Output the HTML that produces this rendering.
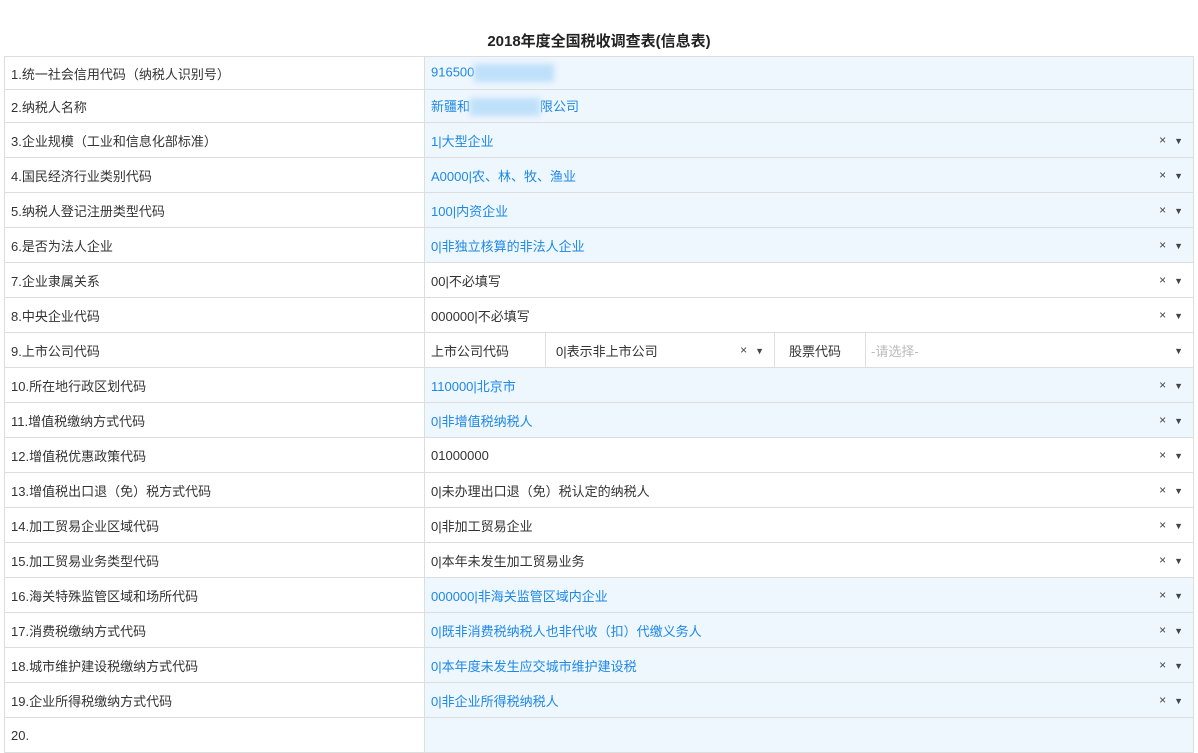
<!DOCTYPE html>
<html><head><meta charset="utf-8"><style>
body{margin:0;background:#fff;font-family:"Liberation Sans","Noto Sans CJK SC",sans-serif;font-size:13px;color:#333;width:1198px;height:721px;overflow:hidden;position:relative}
h1{position:absolute;left:0;width:1198px;top:30px;margin:0;text-align:center;font-size:15px;font-weight:bold;color:#222}
table{position:absolute;left:4px;top:56px;width:1190px;border-collapse:collapse}
td{border:1px solid #ddd;padding:0 6px;height:34px;vertical-align:middle}
td.l{width:407px}
tr.s td{height:32px}
td.v{position:relative}
tr.b td.v{background:#eef6fe;color:#1e88e5}
.ic{position:absolute;right:10px;top:50%;transform:translateY(-50%);font-size:12px;color:#444}
.ic b{font-weight:normal;font-size:9px;margin-left:8px}
.blur{display:inline-block;background:#bfe0fa;filter:blur(3px);height:18px;vertical-align:middle}
.sub{position:absolute;top:0;bottom:0;border-right:1px solid #ddd;display:flex;align-items:center}
</style></head><body>
<h1>2018年度全国税收调查表(信息表)</h1>
<table>
<tr class="b s"><td class="l">1.统一社会信用代码（纳税人识别号）</td><td class="v">916500<span class="blur" style="width:80px"></span></td></tr>
<tr class="b s"><td class="l">2.纳税人名称</td><td class="v">新疆和<span class="blur" style="width:70px"></span>限公司</td></tr>
<tr class="b"><td class="l">3.企业规模（工业和信息化部标准）</td><td class="v">1|大型企业<span class="ic">×<b>▼</b></span></td></tr>
<tr class="b"><td class="l">4.国民经济行业类别代码</td><td class="v">A0000|农、林、牧、渔业<span class="ic">×<b>▼</b></span></td></tr>
<tr class="b"><td class="l">5.纳税人登记注册类型代码</td><td class="v">100|内资企业<span class="ic">×<b>▼</b></span></td></tr>
<tr class="b"><td class="l">6.是否为法人企业</td><td class="v">0|非独立核算的非法人企业<span class="ic">×<b>▼</b></span></td></tr>
<tr><td class="l">7.企业隶属关系</td><td class="v">00|不必填写<span class="ic">×<b>▼</b></span></td></tr>
<tr><td class="l">8.中央企业代码</td><td class="v">000000|不必填写<span class="ic">×<b>▼</b></span></td></tr>
<tr><td class="l">9.上市公司代码</td><td class="v" style="padding:0">
<div class="sub" style="left:0;width:114px;padding-left:6px">上市公司代码</div>
<div class="sub" style="left:121px;width:218px;padding-left:4px;border-left:6px solid #fff">0|表示非上市公司<span class="ic" style="right:10px">×<b>▼</b></span></div>
<div class="sub" style="left:340px;width:100px;justify-content:center">股票代码</div>
<div class="sub" style="left:441px;right:6px;padding-left:5px;color:#bbb;border-right:none">-请选择-<span class="ic" style="right:4px"><b>▼</b></span></div>
</td></tr>
<tr class="b"><td class="l">10.所在地行政区划代码</td><td class="v">110000|北京市<span class="ic">×<b>▼</b></span></td></tr>
<tr class="b"><td class="l">11.增值税缴纳方式代码</td><td class="v">0|非增值税纳税人<span class="ic">×<b>▼</b></span></td></tr>
<tr><td class="l">12.增值税优惠政策代码</td><td class="v">01000000<span class="ic">×<b>▼</b></span></td></tr>
<tr><td class="l">13.增值税出口退（免）税方式代码</td><td class="v">0|未办理出口退（免）税认定的纳税人<span class="ic">×<b>▼</b></span></td></tr>
<tr><td class="l">14.加工贸易企业区域代码</td><td class="v">0|非加工贸易企业<span class="ic">×<b>▼</b></span></td></tr>
<tr><td class="l">15.加工贸易业务类型代码</td><td class="v">0|本年未发生加工贸易业务<span class="ic">×<b>▼</b></span></td></tr>
<tr class="b"><td class="l">16.海关特殊监管区域和场所代码</td><td class="v">000000|非海关监管区域内企业<span class="ic">×<b>▼</b></span></td></tr>
<tr class="b"><td class="l">17.消费税缴纳方式代码</td><td class="v">0|既非消费税纳税人也非代收（扣）代缴义务人<span class="ic">×<b>▼</b></span></td></tr>
<tr class="b"><td class="l">18.城市维护建设税缴纳方式代码</td><td class="v">0|本年度未发生应交城市维护建设税<span class="ic">×<b>▼</b></span></td></tr>
<tr class="b"><td class="l">19.企业所得税缴纳方式代码</td><td class="v">0|非企业所得税纳税人<span class="ic">×<b>▼</b></span></td></tr>
<tr class="b"><td class="l">20.</td><td class="v"></td></tr>
</table>
</body></html>
